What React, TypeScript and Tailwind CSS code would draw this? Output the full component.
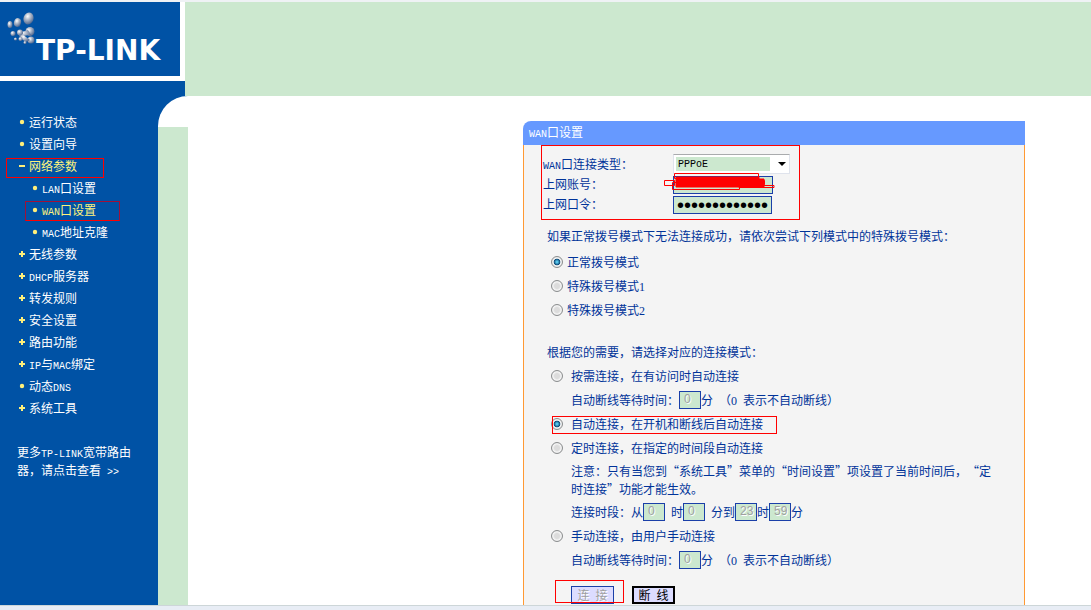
import React, { useState } from "react";

const MENU_RED = "border border-[#ff0000] absolute pointer-events-none";

// latin runs are set half as wide as the chinese characters around them
const T = ({ children }: { children: string }) => (
  <>
    {children.split(/([A-Za-z\-> ]+|[0-9]+)/).map((part, i) => {
      if (i % 2 === 0) return part;
      return /[0-9]/.test(part) ? (
        <span key={i} className="font-['Liberation_Serif',serif] text-[12px] leading-none">
          {part}
        </span>
      ) : (
        <span key={i} className="font-['Liberation_Mono',monospace] text-[10px] leading-none whitespace-pre">
          {part}
        </span>
      );
    })}
  </>
);

const Logo = () => (
  <svg viewBox="0 0 180 74" className="w-[180px] h-[74px] bg-[#0052a5]" role="img" aria-label="TP-LINK">
    <defs>
      <radialGradient id="ball" cx="35%" cy="35%" r="70%">
        <stop offset="0" stopColor="#ffffff" />
        <stop offset="0.4" stopColor="#b4bccb" />
        <stop offset="1" stopColor="#4c6690" />
      </radialGradient>
    </defs>
    <g fill="url(#ball)">
      <ellipse cx="28.500" cy="16.500" rx="5" ry="6" transform="rotate(20 28.500 16.500)" />
      <ellipse cx="17.500" cy="20.500" rx="3.500" ry="4.500" transform="rotate(15 17.500 20.500)" />
      <ellipse cx="10" cy="22.500" rx="2.500" ry="3.500" />
      <ellipse cx="30" cy="29.500" rx="4.500" ry="4.500" />
      <path d="M18 29 Q21 31 28 28 L31 33 Q24 33 20 36 Z" />
      <circle cx="20" cy="30.500" r="3" />
      <circle cx="13" cy="31.500" r="2.500" />
      <circle cx="31" cy="38" r="3.500" />
      <path d="M22 32 L30 38 L26 40 L20 36 Z" />
      <circle cx="20.500" cy="37" r="2" />
      <circle cx="15.500" cy="37" r="1.500" />
      <circle cx="25" cy="40.500" r="1.500" />
    </g>
    <text x="36" y="58" fill="#fff" fontSize="28" fontWeight="700" fontFamily="DejaVu Sans, sans-serif">
      TP-LINK
    </text>
  </svg>
);

const Marker = ({ type }: { type: string }) => (
  <svg viewBox="0 0 6 6" className="size-1.5 shrink-0" fill="#ffef7a">
    {type === "plus" && <path d="M2 0h2v2h2v2H4v2H2V4H0V2h2z" />}
    {type === "minus" && <path d="M0 2h6v2H0z" />}
    {type === "dot" && <circle cx="3" cy="3" r="2.200" />}
  </svg>
);

const Radio = ({ name, id, checked, onChange }: { name: string; id: string; checked: boolean; onChange: () => void }) => (
  <input
    type="radio"
    name={name}
    id={id}
    checked={checked}
    onChange={onChange}
    className="appearance-none size-3 shrink-0 rounded-full border border-[#8b8d8e] bg-[radial-gradient(circle,#dcdcdc_35%,#f6f6f6_60%,#b8bbbd)] checked:bg-[radial-gradient(circle,#55c4ea_12%,#0d4a78_42%,#f4f4f4_52%,#d5d7d8)]"
  />
);

const Num = ({ label, value }: { label: string; value: string }) => (
  <input
    aria-label={label}
    defaultValue={value}
    disabled
    className="w-[22px] h-[18px] border border-[#1a3fa8] bg-[#cce8cf] pl-1 pb-0.5 text-[12px] leading-none text-[#a0a0a0] font-['Liberation_Sans',sans-serif] [text-shadow:1px_1px_0_#fff]"
  />
);

const App = () => {
  const [dial, setDial] = useState("normal");
  const [mode, setMode] = useState("auto");

  return (
    <div
      lang="zh-CN"
      className="min-h-screen flex flex-col bg-white text-[12px] text-[#003399] font-['Noto_Sans_CJK_SC',sans-serif] [text-spacing-trim:space-all]"
    >
      <div className="h-0.5 bg-[#eff2f5]" />
      <header className="flex">
        <div className="w-[185px] shrink-0">
          <Logo />
          <div className="mt-[5px] h-[15px] bg-[#0052a5]" />
        </div>
        <div className="flex-1 bg-[#cce8cf]" />
      </header>

      <div className="flex flex-1">
        <nav className="w-[158px] shrink-0 bg-[#0052a5] text-white pt-[15px]">
          <ul>
            {menu.map((item) => (
              <li key={item.label} className="relative">
                <a
                  href="#"
                  className={`flex items-center h-[22px] ${item.sub ? "pl-8 gap-1" : "pl-[19px] gap-1"} ${
                    item.active ? "text-[#fff27c]" : "text-white"
                  }`}
                >
                  <Marker type={item.type} />
                  <span>
                    <T>{item.label}</T>
                  </span>
                </a>
                {item.active && !item.sub && <div className={`${MENU_RED} left-1.5 top-[3px] w-[98px] h-5`} />}
                {item.active && item.sub && <div className={`${MENU_RED} left-[25px] top-0.5 w-[95px] h-5 border-t-[#a01038] border-x-[#a01038]`} />}
              </li>
            ))}
          </ul>
          <a href="#" className="block mt-6 ml-[17px] mr-6 leading-[18px]">
            <T>更多TP-LINK宽带路由</T>
            <br />
            <T>{"器，请点击查看 >>"}</T>
          </a>
        </nav>
        <div className="w-[30px] shrink-0 flex flex-col">
          <div className="h-[31px] bg-[#0052a5]">
            <div className="h-full bg-white rounded-tl-[30px]" />
          </div>
          <div className="flex-1 bg-[#cce8cf]" />
        </div>

        <main className="flex-1 flex flex-col pt-[25px] pl-[335px] pr-[66px]">
          <h1 className="h-6 pl-1.5 leading-[22px] bg-[#6699ff] text-white rounded-tl-lg">
            <T>WAN口设置</T>
          </h1>
          <form className="flex-1 border-x border-[#ff9933] bg-[#f4f4f4] pl-[17px]" onSubmit={(e) => e.preventDefault()}>
            <div className="w-[259px] border border-[#ff0000] pl-px pt-2 pb-[5px]">
              <div className="flex h-5">
                <label htmlFor="type" className="w-[130px] leading-5">
                  <T>WAN口连接类型：</T>
                </label>
                <div className="relative">
                  <select
                    id="type"
                    className="appearance-none block w-[117px] h-5 bg-white border border-[#dfe3ec] border-t-[#a9abad] p-px pr-[18px] text-black text-[10px] font-['Liberation_Mono',monospace] bg-[linear-gradient(#cce8cf,#cce8cf)] bg-no-repeat bg-[size:94px_14px] bg-[position:2px_2px] pl-1"
                  >
                    <option>PPPoE</option>
                  </select>
                  <svg viewBox="0 0 8 4" className="absolute right-1 top-2 w-2 h-1 pointer-events-none">
                    <path d="M0 0h8L4 4z" />
                  </svg>
                </div>
              </div>
              <div className="flex h-5">
                <label htmlFor="account" className="w-[130px] leading-5">
                  上网账号：
                </label>
                <div className="relative self-end">
                  <input id="account" className="block w-[100px] h-[18px] border border-[#1a3fa8] bg-[#cce8cf] px-1 text-black" />
                  <svg viewBox="0 0 112 18" className="absolute -left-[9px] -top-[3px] w-[112px] h-[18px] pointer-events-none" fill="none" stroke="#ff0000">
                    <path d="M12 4h83v2h5v8H12z" fill="#ff0000" />
                    <path d="M.5 7.500h10v5h-10zM10.500.500h84v5h-84zM8.500 9.500h67v7h-67zM94.500 7.500h6v4h-6zM75 12.500h35v2h-35z" />
                  </svg>
                </div>
              </div>
              <div className="flex h-5">
                <label htmlFor="password" className="w-[130px] leading-5">
                  上网口令：
                </label>
                <input
                  id="password"
                  type="password"
                  defaultValue="1234567890123"
                  className="self-end w-[99px] h-[18px] border border-[#1a3fa8] bg-[#cce8cf] px-[3px] text-black text-[20px] leading-none font-['Liberation_Sans',sans-serif]"
                />
              </div>
            </div>

            <div className="pl-1.5 pt-1">
              <p className="leading-6">如果正常拨号模式下无法连接成功，请依次尝试下列模式中的特殊拨号模式：</p>
              <div className="pt-0.5 pl-1">
                {dialModes.map((m) => (
                  <div key={m.id} className="flex items-center gap-1 h-6">
                    <Radio name="dial" id={m.id} checked={dial === m.id} onChange={() => setDial(m.id)} />
                    <label htmlFor={m.id}>
                      <T>{m.label}</T>
                    </label>
                  </div>
                ))}
              </div>

              <p className="mt-[18px] leading-6">根据您的需要，请选择对应的连接模式：</p>
              <div className="pl-1">
                <div className="flex items-center gap-2 h-6">
                  <Radio name="mode" id="demand" checked={mode === "demand"} onChange={() => setMode("demand")} />
                  <label htmlFor="demand">按需连接，在有访问时自动连接</label>
                </div>
                <div className="flex items-center h-6 pl-5">
                  自动断线等待时间：
                  <Num label="自动断线等待时间" value="0" />
                  <span>
                    <T>分 （0 表示不自动断线）</T>
                  </span>
                </div>
                <div className="relative flex items-center gap-2 h-6">
                  <Radio name="mode" id="auto" checked={mode === "auto"} onChange={() => setMode("auto")} />
                  <label htmlFor="auto">自动连接，在开机和断线后自动连接</label>
                  <div className="absolute left-px top-1 w-[225px] h-[18px] border border-[#ff0000] pointer-events-none" />
                </div>
                <div className="flex items-center gap-2 h-6">
                  <Radio name="mode" id="timed" checked={mode === "timed"} onChange={() => setMode("timed")} />
                  <label htmlFor="timed">定时连接，在指定的时间段自动连接</label>
                </div>
                <p className="pl-5 py-0.5 leading-[18px]">
                  注意：只有当您到“系统工具”菜单的“时间设置”项设置了当前时间后，“定
                  <br />
                  时连接”功能才能生效。
                </p>
                <div className="flex items-center h-6 pl-5">
                  连接时段：从
                  <Num label="开始时" value="0" />
                  <span className="pl-1.5">时</span>
                  <Num label="开始分" value="0" />
                  <span className="pl-1.5">分到</span>
                  <Num label="结束时" value="23" />
                  时
                  <Num label="结束分" value="59" />
                  分
                </div>
                <div className="flex items-center gap-2 h-6">
                  <Radio name="mode" id="manual" checked={mode === "manual"} onChange={() => setMode("manual")} />
                  <label htmlFor="manual">手动连接，由用户手动连接</label>
                </div>
                <div className="flex items-center h-6 pl-5">
                  自动断线等待时间：
                  <Num label="手动断线等待时间" value="0" />
                  <span>
                    <T>分 （0 表示不自动断线）</T>
                  </span>
                </div>
                <div className="relative flex gap-[18px] pl-5 pt-[14px]">
                  <button disabled className="w-[43px] h-[18px] border border-[#1a3fa8] bg-[#dcdcff] text-[#a0a0a0] leading-4 whitespace-pre [text-shadow:1px_1px_0_#fff]">
                    <T>连 接</T>
                  </button>
                  <button className="w-[43px] h-[18px] border-2 border-black bg-[#dcdcff] text-black leading-[14px] whitespace-pre">
                    <T>断 线</T>
                  </button>
                  <div className="absolute left-1 top-2 w-[69px] h-[23px] border border-[#ff0000] pointer-events-none" />
                </div>
              </div>
            </div>
          </form>
        </main>
      </div>
      <footer className="h-[5px] border-t border-[#cdd6d8] bg-[#e8edf5]" />
    </div>
  );
};

export default App;

const menu = [
  { label: "运行状态", type: "dot" },
  { label: "设置向导", type: "dot" },
  { label: "网络参数", type: "minus", active: true },
  { label: "LAN口设置", type: "dot", sub: true },
  { label: "WAN口设置", type: "dot", sub: true, active: true },
  { label: "MAC地址克隆", type: "dot", sub: true },
  { label: "无线参数", type: "plus" },
  { label: "DHCP服务器", type: "plus" },
  { label: "转发规则", type: "plus" },
  { label: "安全设置", type: "plus" },
  { label: "路由功能", type: "plus" },
  { label: "IP与MAC绑定", type: "plus" },
  { label: "动态DNS", type: "dot" },
  { label: "系统工具", type: "plus" },
];

const dialModes = [
  { id: "normal", label: "正常拨号模式" },
  { id: "special1", label: "特殊拨号模式1" },
  { id: "special2", label: "特殊拨号模式2" },
];
